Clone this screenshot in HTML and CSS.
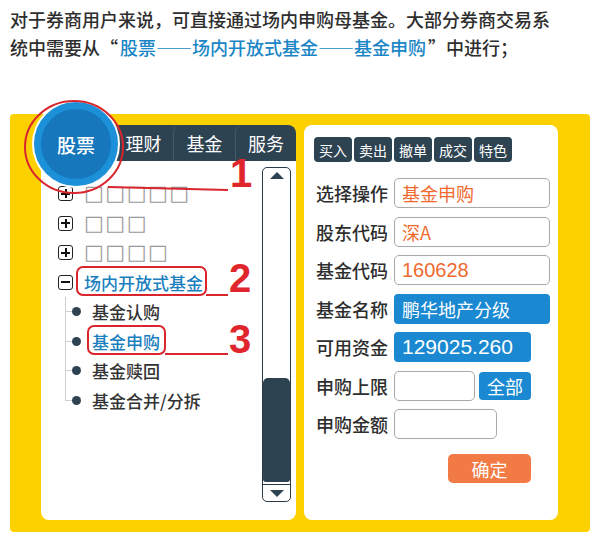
FILE: index.html
```html
<!DOCTYPE html>
<html lang="zh-CN">
<head>
<meta charset="utf-8">
<title>场内申购母基金</title>
<link rel="stylesheet" href="styles.css">
</head>
<body>
<div class="page">
  <p class="intro">对于券商用户来说，可直接通过场内申购母基金。大部分券商交易系统中需要从“<span class="hl">股票——场内开放式基金——基金申购</span>”中进行；</p>

  <div class="board">
    <div class="left">
      <div class="tabs">
        <span class="tab">理财</span>
        <span class="tab">基金</span>
        <span class="tab">服务</span>
      </div>
      <div class="tree-panel">
        <ul class="tree">
          <li class="node"><span class="exp plus"></span><span class="tofu">□□□□□</span></li>
          <li class="node"><span class="exp plus"></span><span class="tofu">□□□</span></li>
          <li class="node"><span class="exp plus"></span><span class="tofu">□□□□</span></li>
          <li class="node"><span class="exp minus"></span><span class="node-label active">场内开放式基金</span></li>
          <li class="children">
            <ul class="sub">
              <li class="leaf"><span class="dot"></span><span>基金认购</span></li>
              <li class="leaf"><span class="dot"></span><span class="active">基金申购</span></li>
              <li class="leaf"><span class="dot"></span><span>基金赎回</span></li>
              <li class="leaf"><span class="dot"></span><span>基金合并/分拆</span></li>
            </ul>
          </li>
        </ul>
        <div class="scrollbar">
          <div class="sb-btn"><span class="tri-up"></span></div>
          <div class="sb-track"><div class="sb-thumb"></div></div>
          <div class="sb-btn sb-down"><span class="tri-down"></span></div>
        </div>
      </div>
    </div>

    <div class="right">
      <div class="actions">
        <span class="act">买入</span>
        <span class="act">卖出</span>
        <span class="act">撤单</span>
        <span class="act">成交</span>
        <span class="act">特色</span>
      </div>
      <div class="form">
        <div class="row"><span class="label">选择操作</span><span class="field w156 orange">基金申购</span></div>
        <div class="row"><span class="label">股东代码</span><span class="field w156 orange">深A</span></div>
        <div class="row"><span class="label">基金代码</span><span class="field w156 orange num">160628</span></div>
        <div class="row"><span class="label">基金名称</span><span class="fill w156">鹏华地产分级</span></div>
        <div class="row"><span class="label">可用资金</span><span class="fill w137 num big">129025.260</span></div>
        <div class="row"><span class="label">申购上限</span><span class="field w81"></span><span class="btn-all">全部</span></div>
        <div class="row"><span class="label">申购金额</span><span class="field w103"></span></div>
        <span class="ok">确定</span>
      </div>
    </div>

    <div class="stock-badge"><span>股票</span></div>
  </div>

  <svg class="marks" width="605" height="539" viewBox="0 0 605 539" aria-hidden="true">
    <g fill="none" stroke="#d9262d" stroke-width="2">
      <ellipse cx="74" cy="147" rx="49" ry="46"/>
      <path d="M108 187 L228 190"/>
      <rect x="77" y="267" width="129" height="28" rx="6"/>
      <path d="M206 295 L228 295"/>
      <rect x="88" y="326" width="77" height="28" rx="6"/>
      <path d="M165 354 L228 354"/>
    </g>
    <g fill="#e0262d" font-family="Liberation Sans, Arial, sans-serif" font-weight="bold" font-size="40">
      <text x="230" y="187">1</text>
      <text x="229" y="292">2</text>
      <text x="229" y="353">3</text>
    </g>
  </svg>
</div>
</body>
</html>
```

FILE: styles.css
```css
* { box-sizing: border-box; }

html, body {
  margin: 0;
  padding: 0;
  background: #ffffff;
}

body {
  font-family: "Noto Sans CJK SC", "Noto Sans", sans-serif;
  color: #333333;
}

.page {
  position: relative;
  width: 605px;
  height: 539px;
  overflow: hidden;
}

.intro {
  margin: 0;
  padding: 5px 0 0 10px;
  width: 560px;
  font-size: 18px;
  line-height: 28px;
  font-weight: 500;
  color: #2e2e2e;
}

.hl { color: #1a86c6; padding: 0 2px; }

.board {
  position: relative;
  margin: 53px 0 0 10px;
  width: 580px;
  height: 418px;
  background: #fdd100;
  border-radius: 4px;
  padding: 11px 32px 12px 31px;
  display: flex;
  gap: 8px;
}

/* ---------- left column ---------- */
.left {
  width: 255px;
  display: flex;
  flex-direction: column;
}

.tabs {
  height: 36px;
  background: #2d4352;
  border-top-right-radius: 8px;
  padding-left: 72px;
  display: flex;
}

.tab {
  display: flex;
  align-items: center;
  justify-content: center;
  color: #ffffff;
  font-size: 18px;
  border-left: 1px solid #45596a;
  border-top-left-radius: 7px;
}
.tab:nth-child(1) { width: 60px; }
.tab:nth-child(2) { width: 62px; }
.tab:nth-child(3) { width: 61px; }

.tree-panel {
  flex: 1;
  background: #ffffff;
  border-radius: 0 0 8px 8px;
  display: flex;
}

.tree {
  flex: 1;
  list-style: none;
  margin: 0;
  padding: 18px 0 0 17px;
  font-size: 17px;
  font-weight: 500;
}

.node {
  height: 29.5px;
  display: flex;
  align-items: center;
}

.exp {
  width: 15px;
  height: 15px;
  border: 1.5px solid #222222;
  border-radius: 3px;
  margin-right: 11px;
  flex: none;
}
.plus {
  background:
    linear-gradient(#111, #111) center / 9px 2px no-repeat,
    linear-gradient(#111, #111) center / 2px 9px no-repeat;
}
.minus {
  background: linear-gradient(#111, #111) center / 9px 2px no-repeat;
}

.tofu {
  font-family: "DejaVu Sans", sans-serif;
  color: #9a9a9a;
  font-size: 21px;
  font-weight: normal;
  letter-spacing: 1.5px;
  line-height: 1;
}

.active { color: #1a7fbe; }

.children { list-style: none; }

.sub {
  list-style: none;
  margin: 0 0 0 7px;
  padding: 0;
}

.leaf {
  height: 29.5px;
  display: flex;
  align-items: center;
  padding-left: 7px;
  color: #333;
  background:
    linear-gradient(#cfcfcf, #cfcfcf) 0 0 / 1px 100% no-repeat,
    linear-gradient(#cfcfcf, #cfcfcf) 0 50% / 8px 1px no-repeat;
}
.leaf:last-child {
  background:
    linear-gradient(#cfcfcf, #cfcfcf) 0 0 / 1px 50% no-repeat,
    linear-gradient(#cfcfcf, #cfcfcf) 0 50% / 8px 1px no-repeat;
}

.dot {
  width: 9px;
  height: 9px;
  border-radius: 50%;
  background: #2d4352;
  margin-right: 11px;
  flex: none;
}

.scrollbar {
  width: 29px;
  margin: 6px 5px 18px 0;
  border: 1.5px solid #2a3a46;
  border-radius: 5px;
  display: flex;
  flex-direction: column;
  overflow: hidden;
}

.sb-btn {
  height: 14px;
  display: flex;
  align-items: center;
  justify-content: center;
  flex: none;
}
.sb-down {
  height: 17px;
  border-top: 1.5px solid #2a3a46;
}

.tri-up {
  width: 0; height: 0;
  border-left: 7px solid transparent;
  border-right: 7px solid transparent;
  border-bottom: 7px solid #2d4352;
}
.tri-down {
  width: 0; height: 0;
  border-left: 7px solid transparent;
  border-right: 7px solid transparent;
  border-top: 7px solid #2d4352;
}

.sb-track {
  flex: 1;
  display: flex;
  flex-direction: column;
}
.sb-thumb {
  margin-top: auto;
  margin-bottom: 2px;
  height: 104px;
  background: #2d4352;
  border-radius: 5px 5px 3px 3px;
}

/* ---------- right column ---------- */
.right {
  width: 254px;
  background: #ffffff;
  border-radius: 8px;
  padding: 12px 8px 0 10px;
}

.actions {
  display: flex;
  gap: 2px;
}
.act {
  width: 38px;
  height: 25px;
  background: #2d4352;
  color: #ffffff;
  border-radius: 4px;
  font-size: 14px;
  display: flex;
  align-items: center;
  justify-content: center;
}

.form {
  margin-top: 16px;
  display: flex;
  flex-direction: column;
  gap: 8.5px;
}

.row {
  display: flex;
  align-items: center;
  height: 30px;
  padding-left: 2px;
}

.label {
  width: 72px;
  margin-right: 6px;
  font-size: 18px;
  font-weight: 500;
  color: #2e2e2e;
  white-space: nowrap;
  flex: none;
}

.field {
  height: 30px;
  border: 1px solid #a9a9a9;
  border-radius: 5px;
  padding-left: 7px;
  display: flex;
  align-items: center;
  font-size: 18px;
}

.fill {
  height: 30px;
  background: #1a89d2;
  border-radius: 4px;
  padding-left: 8px;
  display: flex;
  align-items: center;
  color: #ffffff;
  font-size: 18px;
}

.orange { color: #f06a2e; }
.num { font-family: "Liberation Sans", Arial, sans-serif; font-size: 20px; }
.big { font-size: 21px; }

.w156 { width: 156px; }
.w137 { width: 137px; }
.w81 { width: 81px; }
.w103 { width: 103px; }

.btn-all {
  width: 52px;
  height: 28px;
  margin-left: 4px;
  background: #1a89d2;
  color: #ffffff;
  border-radius: 4px;
  font-size: 18px;
  display: flex;
  align-items: center;
  justify-content: center;
}

.ok {
  align-self: flex-start;
  margin: 6.5px 0 0 134px;
  width: 83px;
  height: 29px;
  background: #f27a45;
  color: #ffffff;
  border-radius: 5px;
  font-size: 18px;
  display: flex;
  align-items: center;
  justify-content: center;
}

/* ---------- overlays ---------- */
.stock-badge {
  position: absolute;
  left: 24px;
  top: -12px;
  width: 84px;
  height: 84px;
  border-radius: 50%;
  background: #1677bc;
  border: 7px solid #1c90d8;
  box-shadow: 0 0 0 2px #ffffff;
  display: flex;
  align-items: center;
  justify-content: center;
}
.stock-badge span {
  color: #ffffff;
  font-size: 19px;
  font-weight: 500;
}

.marks {
  position: absolute;
  left: 0;
  top: 0;
  pointer-events: none;
}
```
